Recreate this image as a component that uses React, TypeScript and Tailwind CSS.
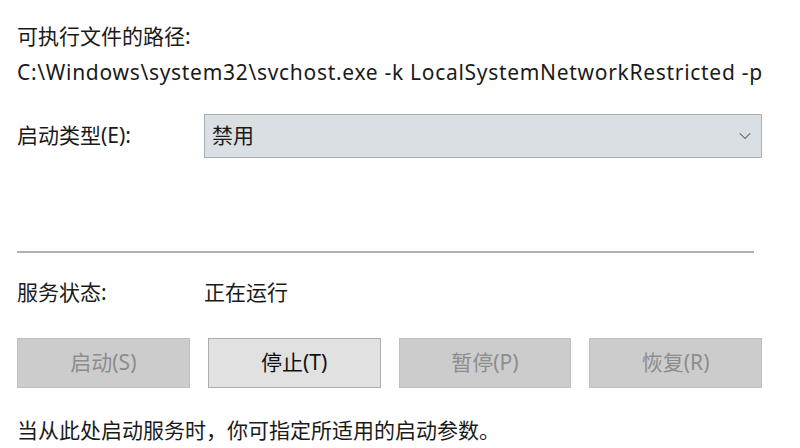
import { ChevronDown } from 'lucide-react';

const font = "font-['Noto_Sans','Noto_Sans_CJK_SC',sans-serif]";

function ActionButton({ label, disabled }: { label: string; disabled?: boolean }) {
  return (
    <button
      type="button"
      disabled={disabled}
      className={
        disabled
          ? 'h-[50px] border border-[#bfbfbf] bg-[#cccccc] text-[#8c8c8c] text-[21px]'
          : 'h-[50px] border border-[#adadad] bg-[#e1e1e1] text-[#111] text-[21px]'
      }
    >
      {label}
    </button>
  );
}

export default function App() {
  return (
    <div className={`w-[800px] h-[448px] bg-white text-[#1a1a1a] ${font} overflow-hidden`}>
      <div className="pl-[17px] pr-[38px] pt-[22px]">
        <div className="text-[21px] leading-[28px]">可执行文件的路径:</div>
        <div className="mt-[8px] text-[21px] tracking-[0.7px] leading-[28px] whitespace-nowrap">
          C:\Windows\system32\svchost.exe -k LocalSystemNetworkRestricted -p
        </div>

        <div className="mt-[28px] flex items-center">
          <div className="w-[187px] text-[21px]">启动类型(E):</div>
          <div className="flex-1 h-[44px] flex items-center justify-between pl-[7px] pr-[6px] bg-[#dadfe3] border border-[#a9adb0]">
            <span className="text-[21px]">禁用</span>
            <ChevronDown size={20} strokeWidth={1.25} className="text-[#555]" />
          </div>
        </div>

        <div className="mt-[93px] mr-[8px] h-[2px] bg-[#b0b0b0]" />

        <div className="mt-[26px] flex items-center h-[28px]">
          <div className="w-[187px] text-[21px]">服务状态:</div>
          <div className="text-[21px]">正在运行</div>
        </div>

        <div className="mt-[31px] grid grid-cols-4 gap-[18px]">
          <ActionButton label="启动(S)" disabled />
          <ActionButton label="停止(T)" />
          <ActionButton label="暂停(P)" disabled />
          <ActionButton label="恢复(R)" disabled />
        </div>

        <div className="mt-[28px] text-[21px] leading-[28px]">当从此处启动服务时，你可指定所适用的启动参数。</div>
      </div>
    </div>
  );
}
